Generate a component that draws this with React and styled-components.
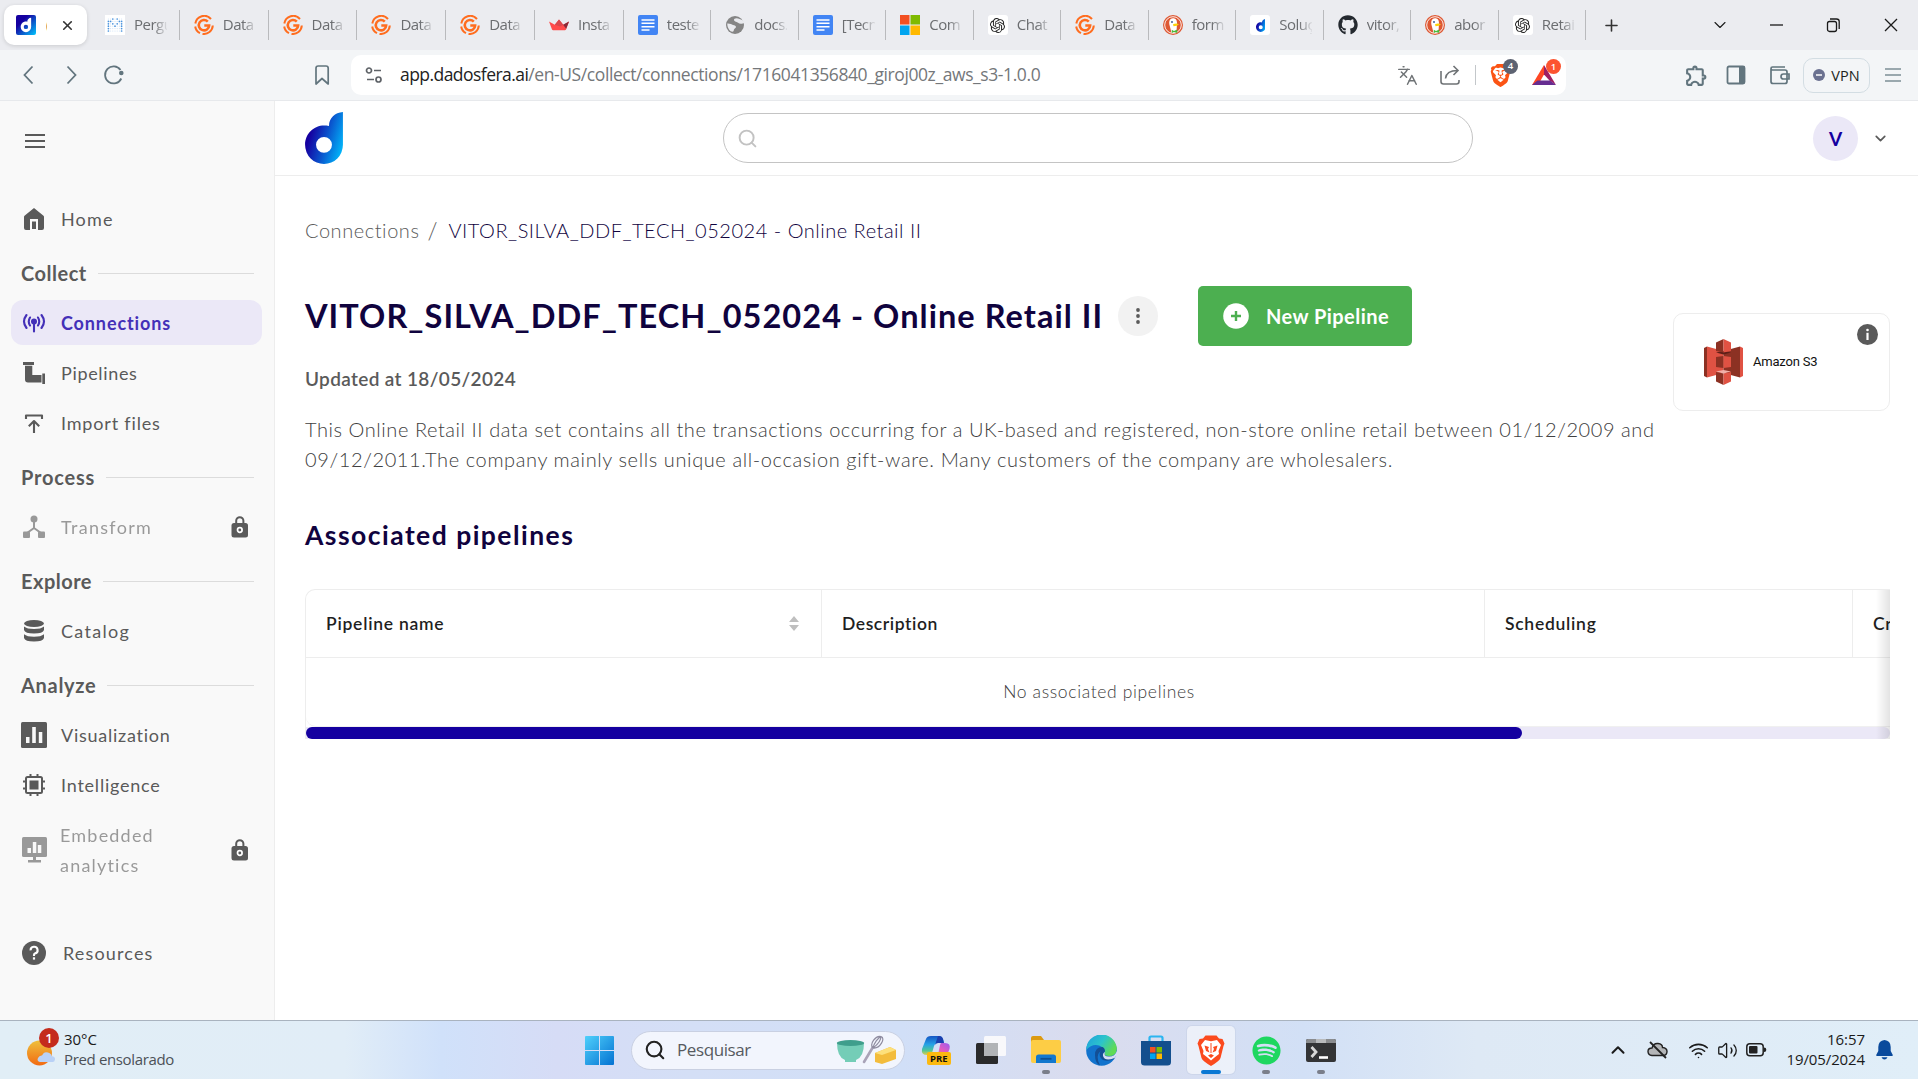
import React from "react";
import styled, { createGlobalStyle, css } from "styled-components";
import { ChevronDown, ChevronUp, Languages, X, Plus, Search, Wifi, Volume2 } from "lucide-react";
import { SiBrave, SiOpenai } from "react-icons/si";
import { FaGithub, FaSpotify } from "react-icons/fa";
import { MdOutlineExtension } from "react-icons/md";

const UI = `"Open Sans", "Noto Sans", sans-serif`;
const APP = `Lato, "Open Sans", sans-serif`;

const Global = createGlobalStyle`
  * { box-sizing: border-box; }
  body { margin: 0; overflow: hidden; background: #fff; }
  svg { display: block; flex: none; }
`;

const Screen = styled.div`
  width: 1918px;
  height: 1079px;
  display: grid;
  grid-template-rows: 50px 51px 919px 59px;
  overflow: hidden;
`;

const Text = styled.span`
  font-size: ${(p) => p.$size}px;
  font-weight: ${(p) => p.$weight || 400};
  letter-spacing: ${(p) => p.$track || 0}px;
  color: ${(p) => p.$color || "inherit"};
  white-space: nowrap;
`;

/* ---------- Tab strip ---------- */
const TabStrip = styled.div`
  display: flex;
  align-items: center;
  background: #ebecf0;
  font-family: ${UI};
  color: #6b6d70;
`;
const ActiveTab = styled.div`
  width: 83px;
  height: 40px;
  margin: 0 4px;
  padding: 0 12px;
  display: flex;
  align-items: center;
  background: #fff;
  border-radius: 10px;
  box-shadow: 0 1px 4px rgba(0, 0, 0, 0.14);
  color: #333;
`;
const ActiveLabel = styled.span`
  width: 6px;
  margin: 0 13px 2px 10px;
  overflow: hidden;
  font-size: 15px;
`;
const Tab = styled.div`
  width: ${(p) => p.$w}px;
  height: 30px;
  padding-left: 14px;
  display: flex;
  align-items: center;
  gap: 9px;
  border-right: 1px solid #b9babd;
`;
const TabLabel = styled.span`
  width: 33px;
  padding-bottom: 2px;
  overflow: hidden;
  white-space: nowrap;
  font-size: 15px;
  letter-spacing: -0.5px;
  mask-image: linear-gradient(90deg, #000 60%, rgba(0, 0, 0, 0.1));
`;
const NewTab = styled.div`
  margin-left: 16px;
  color: #333;
`;
const WindowButtons = styled.div`
  margin-left: auto;
  padding-right: 17px;
  display: flex;
  align-items: center;
  gap: 38px;
  color: #1a1a1a;
`;
const WhiteTile = styled.div`
  width: 20px;
  height: 20px;
  flex: none;
  display: grid;
  place-items: center;
  border-radius: 3px;
  background: #fff;
  color: #222;
`;

const DPath = "M38 0V33A19 19.2 0 0 1 0 33C0 21.500 9 13.500 19 13.500C20.800 13.500 22.300 13.600 24 14C24 6 30 .5 38 0ZM19 25A8 8 0 1 0 19 41A8 8 0 1 0 19 25Z";
const DLogo = ({ w, h }) => (
  <svg width={w} height={h} viewBox="0 0 38 52.200">
    <defs>
      <linearGradient id="dlogo" x1="0" y1="0.450" x2="1" y2="0.850">
        <stop offset="0.100" stopColor="#1500a0" />
        <stop offset="0.500" stopColor="#0a52cc" />
        <stop offset="1" stopColor="#00c2ff" />
      </linearGradient>
    </defs>
    <path d={DPath} fill="url(#dlogo)" fillRule="evenodd" />
  </svg>
);
const DFavicon = () => (
  <svg width="20" height="20" viewBox="0 0 20 20">
    <defs>
      <linearGradient id="dfav" x1="0" y1="0" x2="1" y2="1">
        <stop offset="0.300" stopColor="#1500a0" />
        <stop offset="1" stopColor="#00c8ff" />
      </linearGradient>
    </defs>
    <rect width="20" height="20" rx="2" fill="url(#dfav)" />
    <path transform="translate(4.700 2.800) scale(.275)" d={DPath} fill="#fff" fillRule="evenodd" />
  </svg>
);
const Metabase = () => {
  const rows = ["0010100", "1100011", "1010101", "1001001", "1000001", "1000001"];
  return (
    <svg width="20" height="20" viewBox="0 0 20 20">
      <rect width="20" height="20" fill="#fff" />
      {rows.map((row, y) =>
        [...row].map((c, x) => (
          <circle key={`${x}-${y}`} cx={3.400 + x * 2.200} cy={4 + y * 2.400} r={c === "1" ? 0.850 : 0.600} fill={c === "1" ? "#4a93dd" : "#cfe1f5"} />
        ))
      )}
    </svg>
  );
};
const OrangeG = () => (
  <svg width="20" height="20" viewBox="0 0 20 20" fill="none" stroke="#ff6d1f">
    <path d="M17 4A9 9 0 0 0 1.300 8.500M1.200 11.500A9 9 0 0 0 6 18.200M8.500 18.900A9 9 0 0 0 18.800 10.500" strokeWidth="2" />
    <path d="M13.800 6.600A5.200 5.200 0 1 0 15.200 10.400H10.300" strokeWidth="2.500" />
  </svg>
);
const Streamlit = () => (
  <svg width="20" height="20" viewBox="0 0 20 20">
    <path d="M0 6.500L5.800 9.800 10 4.500 14.200 9.800 20 6.500 17 14.500Q16.700 15.300 15.800 15.300H4.200Q3.300 15.300 3 14.500Z" fill="#ff4b4b" />
    <path d="M10 4.500L14.200 9.800 20 6.500 17.200 13.800Z" fill="#8a2a37" />
    <path d="M5.800 9.800L10 4.500 14.200 9.800 11 11.500Z" fill="#d9484d" />
  </svg>
);
const GoogleDoc = () => (
  <svg width="20" height="20" viewBox="0 0 20 20">
    <rect width="20" height="20" rx="2" fill="#4285f4" />
    <path d="M3.500 5H16.500M3.500 8.300H16.500M3.500 11.700H16.500M3.500 15H11.500" stroke="#fff" strokeWidth="1.600" />
  </svg>
);
const GlobeIcon = () => (
  <svg width="20" height="20" viewBox="0 0 20 20">
    <circle cx="10" cy="10" r="9" fill="#858585" />
    <path d="M11.500 3.200C7.500 3.500 9 6.500 11 6.800S13.500 9.500 17.800 8.500 17.500 4 11.500 3.200ZM2.300 8.500C5 8.300 6.500 9.500 9 10.200S11.500 12.500 9.800 13.500 9.500 16.500 7.500 16.800 2 13 2.300 8.500Z" fill="#e9eaee" />
  </svg>
);
const MsSquares = () => (
  <svg width="20" height="20" viewBox="0 0 20 20">
    <path d="M0 0H9.500V9.500H0Z" fill="#f25022" />
    <path d="M10.500 0H20V9.500H10.500Z" fill="#7fba00" />
    <path d="M0 10.500H9.500V20H0Z" fill="#00a4ef" />
    <path d="M10.500 10.500H20V20H10.500Z" fill="#ffb900" />
  </svg>
);
const Duck = () => (
  <svg width="20" height="20" viewBox="0 0 20 20">
    <circle cx="10" cy="10" r="10" fill="#de5833" />
    <circle cx="10" cy="10" r="8.300" fill="none" stroke="#fff" strokeWidth="0.900" />
    <path d="M8.500 17.700C7.500 13 6 9.500 6.200 7.200 6.400 4.500 8 3.300 10 3.300 13 3.300 14 5.500 14 8L13.500 17.300Q11 18.500 8.500 17.700Z" fill="#fff" />
    <circle cx="9" cy="7" r="0.900" fill="#2d4f8e" />
    <path d="M10 9.300Q13 8 16 9.200 14.500 11.300 10.500 11.300Z" fill="#fdd20a" />
    <path d="M8.700 14.800L11 16 14.200 14.500V18L11 17 8.900 18Z" fill="#4cba3c" />
  </svg>
);
const GptTile = () => (
  <WhiteTile>
    <SiOpenai size={15} />
  </WhiteTile>
);
const DTile = () => (
  <WhiteTile>
    <DLogo w={9.500} h={13} />
  </WhiteTile>
);
const Git = () => <FaGithub size={20} color="#24292f" />;

const tabs = [
  [Metabase, "Pergu"], [OrangeG, "Data"], [OrangeG, "Data"], [OrangeG, "Data"], [OrangeG, "Data"], [Streamlit, "Insta"],
  [GoogleDoc, "teste"], [GlobeIcon, "docs."], [GoogleDoc, "[Tecn"], [MsSquares, "Com"], [GptTile, "Chat"], [OrangeG, "Data"],
  [Duck, "form"], [DTile, "Soluç"], [Git, "vitor,"], [Duck, "abor"], [GptTile, "Retai"],
];

function Tabs() {
  return (
    <TabStrip>
      <ActiveTab>
        <DFavicon />
        <ActiveLabel>(</ActiveLabel>
        <X size={15} strokeWidth={2.600} color="#333" />
      </ActiveTab>
      {tabs.map(([Icon, label], i) => (
        <Tab key={i} $w={i < 6 ? 88.800 : 87.500}>
          <Icon />
          <TabLabel>{label}</TabLabel>
        </Tab>
      ))}
      <NewTab>
        <Plus size={19} strokeWidth={2} />
      </NewTab>
      <WindowButtons>
        <ChevronDown size={20} strokeWidth={1.300} />
        <svg width="19" height="20"><path d="M2 10H15" stroke="currentColor" strokeWidth="1.300" /></svg>
        <svg width="18" height="20" fill="none" stroke="currentColor" strokeWidth="1.300">
          <rect x="2.500" y="6.500" width="9" height="10" rx="2" />
          <path d="M5 4H11.500Q14.200 4 14.200 6.500V14" />
        </svg>
        <svg width="20" height="20"><path d="M4 4L16 16M16 4L4 16" stroke="currentColor" strokeWidth="1.300" /></svg>
      </WindowButtons>
    </TabStrip>
  );
}

/* ---------- Address toolbar ---------- */
const Toolbar = styled.div`
  display: flex;
  align-items: center;
  background: #f3f5f7;
  border-bottom: 1px solid #e7e9ec;
  font-family: ${UI};
  color: #62757e;
`;
const NavButtons = styled.div`
  display: flex;
  align-items: center;
  gap: 18px;
  padding-left: 17px;
  width: 313px;
`;
const Reload = styled.svg`
  margin-left: 2px;
`;
const AddressBar = styled.div`
  width: 1215px;
  height: 40px;
  margin-left: 20px;
  padding: 0 6px 0 14px;
  display: flex;
  align-items: center;
  border-radius: 10px;
  background: #fff;
  color: #6f7376;
`;
const Url = styled.div`
  flex: 1;
  display: flex;
  padding: 0 0 2px 17px;
`;
const BarDivider = styled.i`
  width: 1px;
  height: 20px;
  margin: 0 13px 0 14px;
  background: #c3c7ca;
`;
const Spaced = styled.div`
  margin-left: ${(p) => p.$left}px;
`;
const Badged = styled.div`
  position: relative;
  margin-right: ${(p) => p.$gap}px;
`;
const Badge = styled.span`
  position: absolute;
  left: ${(p) => p.$x}px;
  top: ${(p) => p.$y}px;
  width: ${(p) => p.$s || 15}px;
  height: ${(p) => p.$s || 15}px;
  display: grid;
  place-items: center;
  border-radius: 50%;
  background: ${(p) => p.$bg};
  color: #fff;
  font: 600 ${(p) => p.$font || 9.500}px/1 ${UI};
`;
const Extensions = styled.div`
  margin-left: auto;
  display: flex;
  align-items: center;
  padding-right: 16px;
`;
const Vpn = styled.div`
  width: 67px;
  height: 35px;
  margin: 0 14px 0 13px;
  display: flex;
  align-items: center;
  justify-content: center;
  gap: 6px;
  border: 1px solid #d3dde3;
  border-radius: 10px;
  color: #1d1f21;
`;

function AddressRow() {
  return (
    <Toolbar>
      <NavButtons>
        <svg width="24" height="24" fill="none" stroke="currentColor" strokeWidth="1.800"><path d="M15.500 3.500L7.500 12L15.500 20.500" /></svg>
        <svg width="24" height="24" fill="none" stroke="currentColor" strokeWidth="1.800"><path d="M8.500 3.500L16.500 12L8.500 20.500" /></svg>
        <Reload width="22" height="22" fill="none" stroke="currentColor" strokeWidth="1.800">
          <path d="M17.500 6A8.500 8.500 0 1 0 18.300 14.500" />
          <circle cx="18.300" cy="9" r="2.300" fill="currentColor" stroke="none" />
        </Reload>
      </NavButtons>
      <svg width="18" height="22" fill="none" stroke="currentColor" strokeWidth="1.700">
        <path d="M3 4.200Q3 2 5.200 2H13Q15.200 2 15.200 4.200V20L9 14.500L3 20Z" strokeLinejoin="round" />
      </svg>
      <AddressBar>
        <svg width="18" height="18" fill="none" stroke="#5f6368" strokeWidth="1.700">
          <circle cx="4" cy="4.500" r="2.500" /><path d="M9 4.500H16M2 13.500H9" /><circle cx="13.500" cy="13.500" r="2.500" />
        </svg>
        <Url>
          <Text $size={17.500} $track={-0.550} $color="#222">app.dadosfera.ai</Text>
          <Text $size={17.500} $track={-0.410} $color="#74777a">/en-US/collect/connections/1716041356840_giroj00z_aws_s3-1.0.0</Text>
        </Url>
        <Languages size={21} strokeWidth={1.700} />
        <Spaced $left={21}>
          <svg width="22" height="22" fill="none" stroke="currentColor" strokeWidth="1.600">
            <path d="M2 7V17.500Q2 20 4.500 20H17.500Q20 20 20 17.500V16" />
            <path d="M6.500 14.500C7 9 10.500 6.500 18.500 6.500M14.500 2L19 6.500L14.500 11" />
          </svg>
        </Spaced>
        <BarDivider />
        <Badged $gap={20}>
          <SiBrave size={23} color="#fb5414" />
          <Badge $x={14} $y={-5} $bg="#5d6372">4</Badge>
        </Badged>
        <Badged $gap={4}>
          <svg width="24" height="22" viewBox="0 0 24 22">
            <path d="M12 1L0 21H6L12 10.500Z" fill="#ff4724" />
            <path d="M12 1L24 21L17.500 16.500L12 10.500Z" fill="#9e1f63" />
            <path d="M0 21L5.500 16.500H18L24 21Z" fill="#662d91" />
          </svg>
          <Badge $x={14} $y={-5} $bg="#fc5430">1</Badge>
        </Badged>
      </AddressBar>
      <Extensions>
        <MdOutlineExtension size={25} />
        <Spaced $left={17}>
          <svg width="20" height="20">
            <rect x="1.500" y="1.500" width="17" height="17" rx="1.500" fill="none" stroke="currentColor" strokeWidth="1.800" />
            <path d="M13 1.500H18.500V18.500H13Z" fill="currentColor" />
          </svg>
        </Spaced>
        <Spaced $left={23}>
          <svg width="21" height="20" fill="none" stroke="currentColor" strokeWidth="1.700">
            <path d="M2 4V16.500Q2 18.500 4 18.500H16Q18 18.500 18 16.500V7Q18 5 16 5H3.500Q2 5 2 3.500T3.500 2H16" />
            <path d="M20 9H14.500Q12 9 12 11.500T14.500 14H20Z" />
          </svg>
        </Spaced>
        <Vpn>
          <svg width="12" height="12"><circle cx="6" cy="6" r="6" fill="#6b7190" /><path d="M3 6H9" stroke="#fff" strokeWidth="1.500" /></svg>
          <Text $size={14.500}>VPN</Text>
        </Vpn>
        <svg width="18" height="16"><path d="M1 2H17M1 8H17M1 14H17" stroke="#7d8e96" strokeWidth="1.700" /></svg>
      </Extensions>
    </Toolbar>
  );
}

/* ---------- Sidebar ---------- */
const Body = styled.div`
  display: grid;
  grid-template-columns: 275px 1fr;
  font-family: ${APP};
  min-height: 0;
`;
const Sidebar = styled.nav`
  background: #f9f9f9;
  border-right: 1px solid #ededed;
  padding: 0 12px 0 11px;
  color: #5a5a5a;
`;
const Burger = styled.div`
  height: 95px;
  padding: 32px 0 0 14px;
`;
const NavItem = styled.div`
  height: ${(p) => p.$h || 45}px;
  margin: ${(p) => p.$top || 0}px 0 5px;
  padding: 0 13px 0 10px;
  display: flex;
  align-items: center;
  border-radius: 12px;
  ${(p) => p.$active && css`background: #ebe8f7; color: #4430b8;`}
`;
const IconSlot = styled.div`
  width: 26px;
  margin-right: ${(p) => p.$gap || 14}px;
  display: flex;
  justify-content: center;
  opacity: ${(p) => (p.$dim ? 0.600 : 1)};
`;
const NavLabel = styled(Text)`
  flex: 1;
  line-height: 30px;
  white-space: pre-line;
  opacity: ${(p) => (p.$dim ? 0.600 : 1)};
`;
const SectionTitle = styled.div`
  height: 54px;
  padding: 0 8px 0 10px;
  display: flex;
  align-items: center;
  gap: 11px;
  ${Text} { padding-bottom: 1px; }
  &::after {
    content: "";
    flex: 1;
    height: 1px;
    background: #dcdcdc;
  }
`;

const svg24 = { width: 24, height: 24, viewBox: "0 0 24 24" };
const HomeIcon = () => (
  <svg {...svg24} fill="currentColor">
    <path d="M12 1L21.500 8.700Q22 9.200 22 10V21Q22 23 20 23H16V12H8V23H4Q2 23 2 21V10Q2 9.200 2.500 8.700Z" />
    <path d="M10 14.500H14V22H10Z" />
  </svg>
);
const AntennaIcon = () => (
  <svg {...svg24} fill="none" stroke="currentColor" strokeWidth="2.100" strokeLinecap="round">
    <circle cx="12" cy="10.500" r="3" fill="currentColor" stroke="none" />
    <path d="M12 11V20.500M8 6.500Q5.500 10.500 8 14.500M16 6.500Q18.500 10.500 16 14.500M4.500 4Q-.5 10.500 4.500 17M19.500 4Q24.500 10.500 19.500 17" />
  </svg>
);
const PipeIcon = () => (
  <svg {...svg24} fill="currentColor">
    <path d="M1 1H12V4H1ZM20.300 12.500H23V23H20.300ZM3 4.800H10.300V14H19.500V21.500H6Q3 21.500 3 18.500Z" />
  </svg>
);
const ImportIcon = () => (
  <svg {...svg24} fill="none" stroke="currentColor" strokeWidth="2.100">
    <path d="M4 8V4.500H20V8M12 22V10.500M6.800 15.200L12 10L17.200 15.200" strokeLinejoin="round" />
  </svg>
);
const TransformIcon = () => (
  <svg {...svg24} fill="currentColor">
    <circle cx="12" cy="4" r="3.500" />
    <path d="M12 6V13L5 18M12 13L19 18" stroke="currentColor" strokeWidth="2" fill="none" />
    <rect x="1" y="16.500" width="7" height="6.500" rx="1" /><rect x="16" y="16.500" width="7" height="6.500" rx="1" />
  </svg>
);
const DatabaseIcon = () => (
  <svg {...svg24} fill="currentColor">
    <ellipse cx="12" cy="4.500" rx="10" ry="3.500" />
    <path d="M2 7.500Q5 10 12 10T22 7.500V11Q21 14.500 12 14.500T2 11ZM2 15.300Q5 17.800 12 17.800T22 15.300V19Q21 22.500 12 22.500T2 19Z" />
  </svg>
);
const ChartIcon = () => (
  <svg width="26" height="26" viewBox="0 0 26 26">
    <rect width="26" height="26" rx="1.500" fill="currentColor" />
    <path d="M5 15H8.500V21H5ZM11.200 5H14.800V21H11.200ZM17.800 10H21.300V21H17.800Z" fill="#f9f9f9" />
  </svg>
);
const ChipIcon = () => (
  <svg {...svg24} fill="currentColor">
    <rect x="4" y="4" width="16" height="16" rx="1.500" fill="none" stroke="currentColor" strokeWidth="2" />
    <rect x="7.500" y="7.500" width="9" height="9" />
    <path d="M8.500 1V4M15.500 1V4M8.500 20V23M15.500 20V23M1 8.500H4M1 15.500H4M20 8.500H23M20 15.500H23" stroke="currentColor" strokeWidth="2" />
  </svg>
);
const ScreenIcon = () => (
  <svg width="25" height="26" viewBox="0 0 25 26">
    <rect width="25" height="20" rx="1.500" fill="currentColor" />
    <path d="M11 20H14V23H19V25.500H6V23H11Z" fill="currentColor" />
    <path d="M5.500 11H9V16H5.500ZM10.800 5H14.300V16H10.800ZM15.800 8H19.300V16H15.800Z" fill="#f9f9f9" />
  </svg>
);
const LockIcon = () => (
  <svg width="18" height="22" viewBox="0 0 18 22">
    <path d="M5.200 8V4.800A3.600 3.600 0 0 1 12.400 4.800V8" fill="none" stroke="currentColor" strokeWidth="2" />
    <rect x="0.500" y="7" width="16.500" height="14.500" rx="2.500" fill="currentColor" />
    <circle cx="8.800" cy="14" r="2.300" fill="none" stroke="#fff" strokeWidth="1.700" />
  </svg>
);
const HelpIcon = () => (
  <svg {...svg24}>
    <circle cx="12" cy="12" r="12" fill="currentColor" />
    <path d="M8.600 9.400A3.500 3.400 0 1 1 12.900 12.500Q12 12.900 12 14V15" fill="none" stroke="#fff" strokeWidth="2.100" />
    <rect x="10.900" y="16.300" width="2.200" height="2.300" fill="#fff" />
  </svg>
);

const nav = [
  { label: "Home", icon: HomeIcon, track: 1.150 },
  { section: "Collect", track: 0.500 },
  { label: "Connections", icon: AntennaIcon, active: true, track: 0.880 },
  { label: "Pipelines", icon: PipeIcon, track: 0.660 },
  { label: "Import files", icon: ImportIcon, track: 0.820 },
  { section: "Process", track: 0.780 },
  { label: "Transform", icon: TransformIcon, dim: true, track: 1.300 },
  { section: "Explore", track: 0.480 },
  { label: "Catalog", icon: DatabaseIcon, track: 1.300 },
  { section: "Analyze", track: 0.700 },
  { label: "Visualization", icon: ChartIcon, track: 0.740 },
  { label: "Intelligence", icon: ChipIcon, track: 0.780 },
  { label: "Embedded\nanalytics", icon: ScreenIcon, dim: true, track: 1.200, h: 76, gap: 13 },
  { label: "Resources", icon: HelpIcon, track: 1.150, top: 42, gap: 16 },
];

function SideNav() {
  return (
    <Sidebar>
      <Burger>
        <svg width="20" height="16"><path d="M0 2H20M0 8H20M0 14H20" stroke="currentColor" strokeWidth="2" /></svg>
      </Burger>
      {nav.map((n) =>
        n.section ? (
          <SectionTitle key={n.section}>
            <Text $size={20} $weight={700} $track={n.track}>{n.section}</Text>
          </SectionTitle>
        ) : (
          <NavItem key={n.label} $active={n.active} $h={n.h} $top={n.top}>
            <IconSlot $dim={n.dim} $gap={n.gap}><n.icon /></IconSlot>
            <NavLabel $size={18} $weight={n.active ? 700 : 400} $track={n.track} $dim={n.dim}>{n.label}</NavLabel>
            {n.dim && <LockIcon />}
          </NavItem>
        )
      )}
    </Sidebar>
  );
}

/* ---------- Main area ---------- */
const Main = styled.main`
  min-width: 0;
`;
const Header = styled.header`
  height: 75px;
  padding: 0 29px 0 30px;
  display: flex;
  align-items: center;
  border-bottom: 1px solid #ededed;
`;
const SearchBox = styled.div`
  width: 750px;
  height: 50px;
  margin-left: 380px;
  padding-left: 13px;
  display: flex;
  align-items: center;
  border: 1px solid #c4c4c4;
  border-radius: 25px;
  color: #c2c2c2;
`;
const Account = styled.div`
  margin-left: auto;
  display: flex;
  align-items: center;
  gap: 14px;
  color: #5a5a5a;
`;
const Avatar = styled.div`
  width: 45px;
  height: 45px;
  display: grid;
  place-items: center;
  border-radius: 50%;
  background: #ebe8f7;
`;
const Content = styled.div`
  padding: 40px 28px 0 30px;
`;
const Breadcrumb = styled.div`
  height: 30px;
  padding-bottom: 2px;
  display: flex;
  align-items: center;
  color: #5a5a5a;
`;
const Slash = styled(Text)`
  margin: 0 11px 0 8px;
`;
const Hero = styled.section`
  margin-top: 40px;
  display: flex;
  justify-content: space-between;
`;
const HeroInfo = styled.div`
  width: 1366px;
`;
const TitleRow = styled.div`
  height: 60px;
  display: flex;
  align-items: center;
`;
const Title = styled.h1`
  width: 813px;
  margin: 0;
  padding-bottom: 1px;
  font-size: 32.500px;
  font-weight: 700;
  letter-spacing: 1.050px;
  white-space: nowrap;
  color: #10033e;
`;
const Kebab = styled.button`
  width: 40px;
  height: 40px;
  padding: 0;
  display: grid;
  place-items: center;
  border: 0;
  border-radius: 50%;
  background: #f2f2f2;
  color: #5a5a5a;
`;
const GreenButton = styled.button`
  width: 214px;
  height: 60px;
  margin-left: 40px;
  padding: 0 0 0 25px;
  display: flex;
  align-items: center;
  gap: 17px;
  border: 0;
  border-radius: 5px;
  background: #4caf50;
  color: #fff;
  font-family: ${APP};
  ${Text} { padding-bottom: 1px; }
`;
const Updated = styled.div`
  height: 30px;
  margin-top: 18px;
  line-height: 30px;
`;
const Description = styled.p`
  margin: 20px 0 1px;
  display: flex;
  flex-direction: column;
  line-height: 30px;
`;
const SourceCard = styled.aside`
  width: 217px;
  height: 98px;
  margin-top: 27px;
  padding: 10px 11px 0 30px;
  display: flex;
  border: 1px solid #ededed;
  border-radius: 10px;
  font-family: Roboto, sans-serif;
`;
const SourceLabel = styled.div`
  flex: 1;
  height: 76px;
  display: flex;
  align-items: center;
  gap: 10px;
  ${Text} { padding-bottom: 1px; }
`;
const Subtitle = styled.h2`
  height: 32px;
  margin: 44px 0 38px;
  font-size: 26.500px;
  font-weight: 700;
  line-height: 32px;
  letter-spacing: 1.460px;
  color: #10033e;
`;
const TableFrame = styled.section`
  border: solid #ededed;
  border-width: 1px 0 0 1px;
  border-radius: 10px 0 0 0;
  overflow: hidden;
  position: relative;
  &::after {
    content: "";
    position: absolute;
    inset: 0 0 0 auto;
    width: 14px;
    background: linear-gradient(90deg, rgba(0, 0, 0, 0), rgba(0, 0, 0, 0.110));
  }
`;
const TableHead = styled.div`
  height: 68px;
  display: grid;
  grid-template-columns: 516px 663px 368px 1fr;
  border-bottom: 1px solid #ededed;
`;
const HeadCell = styled.div`
  padding: 0 ${(p) => (p.$sort ? 21 : 0)}px 0 20px;
  display: flex;
  align-items: center;
  justify-content: space-between;
  overflow: hidden;
  border-right: ${(p) => (p.$last ? 0 : 1)}px solid #ededed;
`;
const EmptyRow = styled.div`
  height: 69px;
  padding: 0 0 2px 2px;
  display: grid;
  place-items: center;
  border-bottom: 1px solid #f0f0f0;
  border-radius: 0 0 0 10px;
`;
const ScrollTrack = styled.div`
  height: 12px;
  border-radius: 0 6px 6px 0;
  background: #ebe8f7;
`;
const ScrollThumb = styled.div`
  width: 1216px;
  height: 12px;
  border-radius: 6px;
  background: #1500a0;
`;

const S3Icon = () => (
  <svg width="39" height="46" viewBox="0 0 39 46">
    <path d="M0 9L3 7.500V38.500L0 37Z" fill="#8c3123" />
    <path d="M3 7.500L19.500 12V34L3 38.500Z" fill="#e05243" />
    <path d="M36 7.500L19.500 12V34L36 38.500Z" fill="#8c3123" />
    <path d="M39 9L36 7.500V38.500L39 37Z" fill="#e05243" />
    <path d="M12 13.500L19.500 12L27 13.500L19.500 15.500Z" fill="#5e1f18" />
    <path d="M12 3.500L19.500 0V13.500L12 12Z" fill="#8c3123" />
    <path d="M27 3.500L19.500 0V13.500L27 12Z" fill="#e05243" />
    <path d="M12 18L19.500 17V29L12 28Z" fill="#8c3123" />
    <path d="M27 18L19.500 17V29L27 28Z" fill="#e05243" />
    <path d="M12 32.500L19.500 31L27 32.500L19.500 34.500Z" fill="#f2b0a9" />
    <path d="M12 33L19.500 34.500V46L12 42.500Z" fill="#8c3123" />
    <path d="M27 33L19.500 34.500V46L27 42.500Z" fill="#e05243" />
  </svg>
);

const columns = [
  ["Pipeline name", 0.750, true],
  ["Description", 0.570],
  ["Scheduling", 0.730],
  ["Created at", 0.700],
];

function Page() {
  return (
    <Main>
      <Header>
        <DLogo w={38} h={52} />
        <SearchBox><Search size={21} strokeWidth={2.200} /></SearchBox>
        <Account>
          <Avatar><Text $size={19} $weight={700} $color="#1500a0">V</Text></Avatar>
          <ChevronDown size={17} strokeWidth={2.400} />
        </Account>
      </Header>
      <Content>
        <Breadcrumb>
          <Text $size={20} $weight={300} $track={0.560}>Connections</Text>
          <Slash $size={23} $weight={300}>/</Slash>
          <Text $size={20} $weight={300} $track={0.520} $color="#10033e">VITOR_SILVA_DDF_TECH_052024 - Online Retail II</Text>
        </Breadcrumb>
        <Hero>
          <HeroInfo>
            <TitleRow>
              <Title>VITOR_SILVA_DDF_TECH_052024 - Online Retail II</Title>
              <Kebab>
                <svg width="6" height="18" fill="currentColor"><circle cx="3" cy="3" r="1.900" /><circle cx="3" cy="9" r="1.900" /><circle cx="3" cy="15" r="1.900" /></svg>
              </Kebab>
              <GreenButton>
                <svg width="26" height="26"><circle cx="13" cy="13" r="12.800" fill="#fff" /><path d="M13 8V18M8 13H18" stroke="#4caf50" strokeWidth="2.400" /></svg>
                <Text $size={20} $weight={700} $track={0.450}>New Pipeline</Text>
              </GreenButton>
            </TitleRow>
            <Updated><Text $size={19} $weight={600} $track={0.350} $color="#5a5a5a">Updated at 18/05/2024</Text></Updated>
            <Description>
              <Text $size={20} $weight={300} $track={0.565} $color="#404040">This Online Retail II data set contains all the transactions occurring for a UK-based and registered, non-store online retail between 01/12/2009 and</Text>
              <Text $size={20} $weight={300} $track={0.610} $color="#404040">09/12/2011.The company mainly sells unique all-occasion gift-ware. Many customers of the company are wholesalers.</Text>
            </Description>
          </HeroInfo>
          <SourceCard>
            <SourceLabel>
              <S3Icon />
              <Text $size={13} $track={-0.200} $color="#111">Amazon S3</Text>
            </SourceLabel>
            <svg width="21" height="21"><circle cx="10.500" cy="10.500" r="10.500" fill="#5a5a5a" /><path d="M10.500 8.800V16" stroke="#fff" strokeWidth="2.200" /><circle cx="10.500" cy="6" r="1.300" fill="#fff" /></svg>
          </SourceCard>
        </Hero>
        <Subtitle>Associated pipelines</Subtitle>
        <TableFrame>
          <TableHead>
            {columns.map(([name, track, sort], i) => (
              <HeadCell key={name} $sort={sort} $last={i === 3}>
                <Text $size={17.500} $weight={600} $track={track} $color="#1f1f1f">{name}</Text>
                {sort && <svg width="12" height="15" fill="#bfbfbf"><path d="M1 6L6 0L11 6ZM1 9L6 15L11 9Z" /></svg>}
              </HeadCell>
            ))}
          </TableHead>
          <EmptyRow><Text $size={17.500} $weight={300} $track={0.640} $color="#3c3c3c">No associated pipelines</Text></EmptyRow>
          <ScrollTrack><ScrollThumb /></ScrollTrack>
        </TableFrame>
      </Content>
    </Main>
  );
}

/* ---------- Taskbar ---------- */
const Taskbar = styled.footer`
  display: flex;
  align-items: center;
  border-top: 1px solid #a9b3bf;
  background: linear-gradient(90deg, #e1eef6 0%, #e1edf7 18%, #d0e1fa 23%, #d6dcf6 29%, #d4dff6 36%, #d1dff7 47%, #dadcee 57%, #d2e0f6 68%, #dee9f5 77%, #e0eef8 100%);
  font-family: ${UI};
  color: #1b1b1b;
`;
const Weather = styled.div`
  width: 585px;
  padding-left: 26px;
  display: flex;
  align-items: center;
  gap: 8px;
`;
const Stack = styled.div`
  display: flex;
  flex-direction: column;
  align-items: ${(p) => p.$align || "flex-start"};
  padding-bottom: 2px;
  line-height: 20px;
`;
const SearchPill = styled.div`
  width: 274px;
  height: 39px;
  margin-left: 17px;
  padding: 0 6px 0 12px;
  display: flex;
  align-items: center;
  border: 1px solid #c9d0e2;
  border-radius: 20px;
  background: #f2f5fd;
`;
const PillText = styled(Text)`
  flex: 1;
  margin: 0 0 1px 11px;
`;
const AppSlot = styled.div`
  position: relative;
  width: 48px;
  height: 48px;
  margin-left: 7px;
  display: grid;
  place-items: center;
  border-radius: 5px;
  ${(p) => p.$active && css`background: rgba(255, 255, 255, 0.550); box-shadow: 0 0 0 1px rgba(190, 200, 220, 0.350);`}
`;
const Running = styled.i`
  position: absolute;
  bottom: 0;
  left: 50%;
  transform: translateX(-50%);
  width: ${(p) => (p.$active ? 20 : 8)}px;
  height: 4px;
  border-radius: 2px;
  background: ${(p) => (p.$active ? "#0a78d4" : "#7a7e8a")};
`;
const Tray = styled.div`
  margin-left: auto;
  padding-right: 25px;
  display: flex;
  align-items: center;
`;
const TrayIcon = styled.div`
  margin-right: ${(p) => p.$gap}px;
`;
const PreTag = styled.b`
  position: absolute;
  left: 15px;
  bottom: 9px;
  padding: 0 3px;
  border-radius: 2px;
  background: #fcb90f;
  color: #111;
  font: 700 9.500px/13px ${UI};
`;

const WinLogo = () => (
  <svg width="29" height="29" viewBox="0 0 29 29">
    <defs><linearGradient id="win" x1="0" y1="0" x2="1" y2="1" gradientUnits="objectBoundingBox"><stop stopColor="#4fd0fb" /><stop offset="1" stopColor="#0472d2" /></linearGradient></defs>
    <path d="M1 0H14V14H0V1Q0 0 1 0ZM15 0H28Q29 0 29 1V14H15ZM0 15H14V29H1Q0 29 0 28ZM15 15H29V28Q29 29 28 29H15Z" fill="url(#win)" />
  </svg>
);
const Baking = () => (
  <svg width="62" height="30" viewBox="0 0 62 30">
    <path d="M1 8H28Q28 22 20 25V27H9V25Q1 22 1 8Z" fill="#74cdb7" />
    <ellipse cx="14.500" cy="8" rx="13.700" ry="3" fill="#3f9e8c" />
    <path d="M28 27L37 12" stroke="#a9a3b8" strokeWidth="2.600" strokeLinecap="round" />
    <path d="M37 13C33 9 40 0 45 1.500S44 14 37 13ZM37 13C38 8 42 3 45 1.500M37 13C41 10 45 6 45 1.500" fill="none" stroke="#8f8ca0" strokeWidth="1.200" />
    <path d="M39 18L54 12L60 15V24L46 29L39 27Z" fill="#f3bc3c" /><path d="M39 18L54 12L60 15L46 20Z" fill="#fde07b" />
  </svg>
);
const CopilotIcon = () => (
  <svg width="30" height="30" viewBox="0 0 30 30">
    <defs><linearGradient id="cpl" x1="0" x2="0" y1="0" y2="1"><stop stopColor="#1556c4" /><stop offset="0.450" stopColor="#25a2e6" /><stop offset="0.750" stopColor="#4cc59b" /><stop offset="1" stopColor="#e0cf4a" /></linearGradient>
      <linearGradient id="cpr" x1="1" x2="0.300" y1="0" y2="1"><stop stopColor="#9a5cf0" /><stop offset="0.500" stopColor="#e25bc0" /><stop offset="1" stopColor="#fb8a5c" /></linearGradient></defs>
    <path d="M10 1H18Q21 1 22 4L23 8H17Q14 8 13 11L11 18Q10 20 6 20 0 20 1 14L5 4Q6 1 10 1Z" fill="url(#cpl)" />
    <path d="M17 1H18Q21 1 22 4L23 8H17Q15 8 14 10Z" fill="#1a3fae" />
    <path d="M20 8H24Q30 8 28.500 14L26 20Q24 25 20 25H13Q16 24 17 20L19 10Z" fill="url(#cpr)" />
  </svg>
);
const DesktopsIcon = () => (
  <svg width="30" height="28" viewBox="0 0 30 28">
    <rect x="0" y="7" width="22" height="21" rx="1.500" fill="#2a2a2b" /><rect x="8" y="0" width="22" height="20" rx="1.500" fill="#f8f8fb" /><path d="M8 7H22V20H8Z" fill="#b1b3b6" />
  </svg>
);
const FolderIcon = () => (
  <svg width="30" height="28" viewBox="0 0 30 28">
    <path d="M0 2Q0 0 2 0H10L13 4V9H0Z" fill="#dc9a10" /><path d="M0 6Q0 4 2 4H28Q30 4 30 6V25Q30 27 28 27H2Q0 27 0 25Z" fill="#fdcd45" />
    <path d="M5 27V21Q5 18.500 7.500 18.500H22.500Q25 18.500 25 21V27Z" fill="#1278ce" /><path d="M9.500 22.800H20.500" stroke="#0b4f92" strokeWidth="1.800" />
  </svg>
);
const EdgeIcon = () => (
  <svg width="31" height="31" viewBox="0 0 31 31">
    <defs><linearGradient id="eg" x1="0" x2="1" y1="0" y2="0.500"><stop stopColor="#1da0de" /><stop offset="0.550" stopColor="#2cc4cb" /><stop offset="1" stopColor="#5fdb54" /></linearGradient></defs>
    <circle cx="15.500" cy="15.500" r="15.300" fill="#1273cd" />
    <path d="M.3 15A15.300 15.300 0 0 1 30.800 13Q31 21 23 21 17 21 18.500 17.500C20 12 8 5 .3 15Z" fill="url(#eg)" />
    <path d="M9 20Q9 12 16.500 12 20 14 18.500 17.500 17 21.500 23 21.500 27 21.500 29 19.500L28 24Q22 27 17 25 12 22 14.500 16 9 21 14 30.600 9 28 9 20Z" fill="#134f96" />
    <path d="M19 17Q17 21.500 23 21.500T31 16V20L28.500 23Q19 27 17 21 16.500 18 19 17Z" fill="#d6def2" />
  </svg>
);
const StoreIcon = () => (
  <svg width="30" height="31" viewBox="0 0 30 31">
    <path d="M8.500 6V3Q8.500 1.500 10 1.500H20Q21.500 1.500 21.500 3V6" fill="none" stroke="#2bb5f0" strokeWidth="2.200" />
    <path d="M0 6H30V27Q30 30.500 26.500 30.500H3.500Q0 30.500 0 27Z" fill="#134f8e" />
    <path d="M9 12H14.500V17.500H9Z" fill="#f25022" /><path d="M15.500 12H21V17.500H15.500Z" fill="#7fba00" /><path d="M9 18.500H14.500V24H9Z" fill="#00a4ef" /><path d="M15.500 18.500H21V24H15.500Z" fill="#ffb900" />
  </svg>
);
const BraveIcon = () => (
  <svg width="28" height="31" viewBox="0 0 28 31">
    <path d="M8.500 0.500H19.500L22 3.500L25.500 4L27.500 8.500L26.500 11L23.500 23Q22.500 26 14 31Q5.500 26 4.500 23L1.500 11L.5 8.500L2.500 4L6 3.500Z" fill="#fb4a1e" />
    <path d="M8 5L14 6.200L20 5L24 10L21.500 16L22 19L17.500 22.500L14 25.500L10.500 22.500L6 19L6.500 16L4 10Z" fill="#fff" />
    <path d="M7.500 10.500L12 12L11 14L12.500 17.500L9 16ZM20.500 10.500L16 12L17 14L15.500 17.500L19 16ZM11 20.500L14 19L17 20.500L14 23ZM13.500 8H14.500V18H13.500Z" fill="#fb4a1e" />
  </svg>
);
const TerminalIcon = () => (
  <svg width="30" height="23" viewBox="0 0 30 23">
    <rect width="30" height="23" rx="2" fill="#333436" /><path d="M0 4V2Q0 0 2 0H28Q30 0 30 2V4Z" fill="#8a8c8f" /><path d="M10 0H20V4H10Z" fill="#b9bbbd" />
    <path d="M5.500 8L10 13L5.500 18" fill="none" stroke="#d8d8d8" strokeWidth="2.800" /><path d="M13 18.500H22" stroke="#fff" strokeWidth="2.600" />
  </svg>
);
const WeatherIcon = () => (
  <svg width="30" height="38" viewBox="0 0 30 38">
    <defs><linearGradient id="sun" x1="0" x2="0" y1="0" y2="1"><stop stopColor="#eec03c" /><stop offset="1" stopColor="#f26a12" /></linearGradient></defs>
    <circle cx="13.500" cy="22" r="12.500" fill="url(#sun)" />
    <path d="M14 31Q10.500 30 12 27T16 24.500Q18 20 22 21.500T25.500 25Q29.500 25.500 29 28.500T26 31Z" fill="#b9d1f6" />
  </svg>
);

function WindowsBar() {
  return (
    <Taskbar>
      <Weather>
        <Badged $gap={0}>
          <WeatherIcon />
          <Badge $x={13} $y={-3} $s={20} $bg="#c42b1c" $font={13}>1</Badge>
        </Badged>
        <Stack>
          <Text $size={15} $track={-0.050}>30°C</Text>
          <Text $size={15} $track={-0.350} $color="#4c5157">Pred ensolarado</Text>
        </Stack>
      </Weather>
      <WinLogo />
      <SearchPill>
        <Search size={22} strokeWidth={2.300} color="#222" />
        <PillText $size={17} $track={-0.400} $color="#565a60">Pesquisar</PillText>
        <Baking />
      </SearchPill>
      <AppSlot><CopilotIcon /><PreTag>PRE</PreTag></AppSlot>
      <AppSlot><DesktopsIcon /></AppSlot>
      <AppSlot><FolderIcon /><Running /></AppSlot>
      <AppSlot><EdgeIcon /></AppSlot>
      <AppSlot><StoreIcon /></AppSlot>
      <AppSlot $active><BraveIcon /><Running $active /></AppSlot>
      <AppSlot><FaSpotify size={29} color="#1ed760" /><Running /></AppSlot>
      <AppSlot><TerminalIcon /><Running /></AppSlot>
      <Tray>
        <TrayIcon $gap={18}><ChevronUp size={22} strokeWidth={2.200} /></TrayIcon>
        <TrayIcon $gap={20}>
          <svg width="21" height="18" fill="none" stroke="#222" strokeWidth="1.400">
            <path d="M5 14.500Q1 14 1 10.500T5 7Q6.500 2 11 2.500T15.500 6.500Q20 7 20 10.500T16.500 14.500Z" fill="#b4b6b8" /><path d="M3 1L19 17" strokeWidth="1.800" />
          </svg>
        </TrayIcon>
        <TrayIcon $gap={8}><Wifi size={21} strokeWidth={1.800} /></TrayIcon>
        <TrayIcon $gap={8}><Volume2 size={21} strokeWidth={1.500} /></TrayIcon>
        <TrayIcon $gap={20}>
          <svg width="21" height="14"><rect x="0.800" y="0.800" width="16.400" height="12" rx="3" fill="none" stroke="#222" strokeWidth="1.500" /><rect x="3" y="3" width="8.500" height="7.600" rx="1" fill="#222" /><path d="M18 4.500Q20.300 4.500 20.300 6.800T18 9Z" fill="#222" /></svg>
        </TrayIcon>
        <TrayIcon $gap={11}>
          <Stack $align="flex-end">
            <Text $size={15} $track={-0.060}>16:57</Text>
            <Text $size={15} $track={-0.120}>19/05/2024</Text>
          </Stack>
        </TrayIcon>
        <svg width="17" height="20" fill="#0a4a9c"><path d="M8.500 0Q14.500 .5 14.700 7V11L16.800 15Q17 16 16 16H1Q0 16 .2 15L2.300 11V7Q2.500 .5 8.500 0ZM5.500 17.300H11.500Q10.500 19.600 8.500 19.600T5.500 17.300Z" /></svg>
      </Tray>
    </Taskbar>
  );
}

export default function App() {
  return (
    <Screen>
      <Global />
      <Tabs />
      <AddressRow />
      <Body>
        <SideNav />
        <Page />
      </Body>
      <WindowsBar />
    </Screen>
  );
}
